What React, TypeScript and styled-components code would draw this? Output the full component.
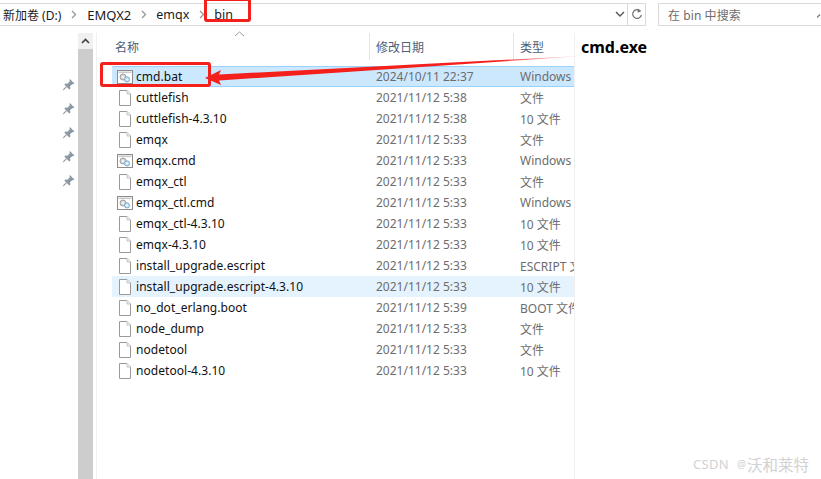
import React from "react";
import styled, { createGlobalStyle } from "styled-components";

const Global = createGlobalStyle`
  html, body { margin: 0; padding: 0; background: #fff; }
  body { width: 821px; height: 479px; overflow: hidden; font-family: "Noto Sans", "Noto Sans CJK SC", sans-serif; font-size: 12px; }
  #root { width: 821px; height: 479px; }
`;

const Page = styled.div`
  position: relative;
  width: 821px;
  height: 479px;
  overflow: hidden;
  display: flex;
  flex-direction: column;
  padding-top: 3px;
  box-sizing: border-box;
`;
const TopBar = styled.div`
  display: flex;
  height: 23px;
  gap: 12px;
  flex: none;
`;
const AddressBox = styled.div`
  width: 646px;
  box-sizing: border-box;
  border: 1px solid #d9d9d9;
  border-left: none;
  display: flex;
  align-items: center;
  color: #1a1a1a;
`;
const Crumb = styled.span<{ $ml: number; $size?: number }>`
  font-size: ${(p) => p.$size ?? 12.5}px;
  margin-left: ${(p) => p.$ml}px;
  white-space: nowrap;
`;
const Sep = styled.svg`
  margin-left: 10px;
  flex: none;
`;
const AddressEnd = styled.div`
  margin-left: auto;
  display: flex;
  align-items: center;
  height: 100%;
`;
const DropBtn = styled.div`
  width: 17px;
  box-sizing: border-box;
  padding-left: 2px;
  display: flex;
  justify-content: center;
`;
const RefreshBtn = styled.div`
  width: 17px;
  height: 100%;
  border-left: 1px solid #d9d9d9;
  display: flex;
  align-items: center;
  justify-content: center;
`;
const SearchBox = styled.div`
  flex: 1;
  box-sizing: border-box;
  border: 1px solid #d9d9d9;
  border-right: none;
  padding-left: 9px;
  display: flex;
  align-items: center;
  justify-content: space-between;
  color: #6d6d6d;
  font-size: 12px;
  letter-spacing: 0.08px;
`;
const Body = styled.div`
  flex: 1;
  display: flex;
  padding-top: 7px;
  min-height: 0;
`;
const QuickPane = styled.div`
  width: 78px;
  flex: none;
  box-sizing: border-box;
  padding: 43px 1px 0 0;
  display: flex;
  flex-direction: column;
  align-items: flex-end;
  gap: 7px;
`;
const Pin = styled.svg`
  width: 17px;
  height: 17px;
  display: block;
`;
const Scrollbar = styled.div`
  width: 15px;
  flex: none;
  background: #cdcdcd;
  display: flex;
  flex-direction: column;
`;
const ScrollUp = styled.div`
  height: 16px;
  background: #f0f0f0;
  display: flex;
  align-items: center;
  justify-content: center;
`;
const FileArea = styled.div`
  width: 479px;
  flex: none;
  box-sizing: border-box;
  border-left: 1px solid #f0f0f0;
  border-right: 1px solid #f0f0f0;
  margin-left: 3px;
  display: flex;
  flex-direction: column;
  position: relative;
`;
const Header = styled.div`
  height: 27px;
  display: grid;
  grid-template-columns: 273px 144px 1fr;
  flex: none;
  margin-bottom: 6px;
`;
const HeadCell = styled.div<{ $pl: number }>`
  color: #4c607a;
  font-size: 12px;
  box-sizing: border-box;
  padding-left: ${(p) => p.$pl}px;
  display: flex;
  align-items: center;
  border-right: 1px solid #e5e5e5;
  &:last-child { border-right: none; }
`;
const SortArrow = styled.svg`
  position: absolute;
  left: 137px;
  top: -2px;
`;
const Row = styled.div<{ $state?: "selected" | "hover" }>`
  height: 21px;
  margin-left: 15px;
  box-sizing: border-box;
  display: grid;
  grid-template-columns: 257px 144px 1fr;
  align-items: center;
  background: ${(p) => (p.$state === "selected" ? "#cce8ff" : p.$state === "hover" ? "#e5f3ff" : "transparent")};
  border-top: 1px solid ${(p) => (p.$state === "selected" ? "#99d1ff" : "transparent")};
  border-bottom: 1px solid ${(p) => (p.$state === "selected" ? "#99d1ff" : "transparent")};
  overflow: hidden;
`;
const NameCell = styled.div`
  display: flex;
  align-items: center;
  gap: 3px;
  padding-left: 5px;
  color: #111;
  white-space: nowrap;
  letter-spacing: 0.05px;
`;
const GreyCell = styled.div`
  color: #6d6d6d;
  padding-left: 7px;
  white-space: nowrap;
  overflow: hidden;
`;
const Icon = styled.svg`
  width: 16px;
  height: 16px;
  flex: none;
`;
const Annotation = styled.div<{ $x: number; $y: number; $w: number; $h: number }>`
  position: absolute;
  box-sizing: border-box;
  border: 3px solid #f4201c;
  border-radius: 3px;
  left: ${(p) => p.$x}px;
  top: ${(p) => p.$y}px;
  width: ${(p) => p.$w}px;
  height: ${(p) => p.$h}px;
`;
const Arrow = styled.svg`
  position: absolute;
  left: 0;
  top: 0;
`;
const Note = styled.div`
  position: absolute;
  left: 581px;
  top: 36px;
  font-size: 16px;
  font-weight: 700;
  color: #000;
  font-family: "Noto Sans", sans-serif;
`;
const Watermark = styled.div`
  position: absolute;
  left: 693px;
  top: 452px;
  height: 24px;
  display: flex;
  align-items: center;
  color: #d2d2d2;
  white-space: nowrap;
`;
const MarkLatin = styled.span`
  font-size: 13px;
  letter-spacing: 0.3px;
`;
const MarkAt = styled.span`
  font-size: 10px;
  margin-left: 8px;
`;
const MarkName = styled.span`
  font-size: 15.5px;
  margin-left: 1px;
`;

const Chevron = () => (
  <Sep width="6" height="9" viewBox="0 0 6 9"><path d="M1 1l3.5 3.5L1 8" fill="none" stroke="#9a9a9a" strokeWidth="1.4" /></Sep>
);
const PinIcon = () => (
  <Pin viewBox="0 0 17 17">
    <path d="M10 3l4.4 4.4-1 .8-1-.2-2.3 2.3.2 2.2-1 1-5-5 1-1 2.2.2L9.8 5.2l-.3-1.2z" fill="#8b98a6" />
    <path d="M6.8 10.4l-3.6 3.6" fill="none" stroke="#9aa3ad" strokeWidth="1.2" />
  </Pin>
);
const DocIcon = () => (
  <Icon viewBox="0 0 16 16">
    <path d="M2.5.5h7.5l3.5 3.5v11.5h-11z" fill="#fff" stroke="#9a9a9a" />
    <path d="M10 .5v3.5h3.5" fill="#f2f2f2" stroke="#c4c4c4" />
  </Icon>
);
const CmdIcon = () => (
  <Icon viewBox="0 0 16 16">
    <rect x=".5" y="1.5" width="15" height="13" fill="#fff" stroke="#8c8c8c" />
    <rect x="1.5" y="2.5" width="13" height="1.6" fill="#c9c9c9" />
    <circle cx="6" cy="8" r="3" fill="#d6d6d6" stroke="#a0a0a0" />
    <circle cx="6" cy="8" r="1" fill="#fff" />
    <circle cx="10" cy="10.4" r="2.6" fill="#c4def2" stroke="#7fb0d2" />
    <circle cx="10" cy="10.4" r=".9" fill="#fff" />
  </Icon>
);

type F = { n: string; d: string; t: string; k?: "cmd"; s?: "selected" | "hover" };
const files: F[] = [
  { n: "cmd.bat", d: "2024/10/11 22:37", t: "Windows", k: "cmd", s: "selected" },
  { n: "cuttlefish", d: "2021/11/12 5:38", t: "文件" },
  { n: "cuttlefish-4.3.10", d: "2021/11/12 5:38", t: "10 文件" },
  { n: "emqx", d: "2021/11/12 5:33", t: "文件" },
  { n: "emqx.cmd", d: "2021/11/12 5:33", t: "Windows", k: "cmd" },
  { n: "emqx_ctl", d: "2021/11/12 5:33", t: "文件" },
  { n: "emqx_ctl.cmd", d: "2021/11/12 5:33", t: "Windows", k: "cmd" },
  { n: "emqx_ctl-4.3.10", d: "2021/11/12 5:33", t: "10 文件" },
  { n: "emqx-4.3.10", d: "2021/11/12 5:33", t: "10 文件" },
  { n: "install_upgrade.escript", d: "2021/11/12 5:33", t: "ESCRIPT 文件" },
  { n: "install_upgrade.escript-4.3.10", d: "2021/11/12 5:33", t: "10 文件", s: "hover" },
  { n: "no_dot_erlang.boot", d: "2021/11/12 5:39", t: "BOOT 文件" },
  { n: "node_dump", d: "2021/11/12 5:33", t: "文件" },
  { n: "nodetool", d: "2021/11/12 5:33", t: "文件" },
  { n: "nodetool-4.3.10", d: "2021/11/12 5:33", t: "10 文件" },
];

export default function App() {
  return (
    <Page>
      <Global />
      <TopBar>
        <AddressBox>
          <Crumb $ml={3} $size={12}>新加卷 (D:)</Crumb>
          <Chevron />
          <Crumb $ml={10} $size={13}>EMQX2</Crumb>
          <Chevron />
          <Crumb $ml={9}>emqx</Crumb>
          <Chevron />
          <Crumb $ml={9}>bin</Crumb>
          <AddressEnd>
            <DropBtn>
              <svg width="10" height="7" viewBox="0 0 10 7"><path d="M1 1l4 4 4-4" fill="none" stroke="#555" strokeWidth="1.4" /></svg>
            </DropBtn>
            <RefreshBtn>
              <svg width="12" height="13" viewBox="0 0 12 13"><path d="M9.5 3.2A4.4 4.4 0 1 0 10.4 7" fill="none" stroke="#707070" strokeWidth="1.2" /><path d="M6.6 .6l3.4 2.6-3.4 1.6z" fill="#707070" /></svg>
            </RefreshBtn>
          </AddressEnd>
        </AddressBox>
        <SearchBox>
          在 bin 中搜索
          <svg width="4" height="6" viewBox="0 0 4 6"><path d="M0 5.5L3 2.5" fill="none" stroke="#707070" strokeWidth="1.2" /></svg>
        </SearchBox>
      </TopBar>
      <Body>
        <QuickPane>
          {[0, 1, 2, 3, 4].map((i) => <PinIcon key={i} />)}
        </QuickPane>
        <Scrollbar>
          <ScrollUp>
            <svg width="9" height="6" viewBox="0 0 9 6"><path d="M1 5l3.5-3.5L8 5" fill="none" stroke="#404040" strokeWidth="1.6" /></svg>
          </ScrollUp>
        </Scrollbar>
        <FileArea>
          <SortArrow width="11" height="6" viewBox="0 0 11 6"><path d="M1 5l4.5-4L10 5" fill="none" stroke="#9a9a9a" /></SortArrow>
          <Header>
            <HeadCell $pl={18}>名称</HeadCell>
            <HeadCell $pl={6}>修改日期</HeadCell>
            <HeadCell $pl={6}>类型</HeadCell>
          </Header>
          {files.map((f) => (
            <Row key={f.n} $state={f.s}>
              <NameCell>
                {f.k === "cmd" ? <CmdIcon /> : <DocIcon />}
                {f.n}
              </NameCell>
              <GreyCell>{f.d}</GreyCell>
              <GreyCell>{f.t}</GreyCell>
            </Row>
          ))}
        </FileArea>
      </Body>
      <Note>cmd.exe</Note>
      <Watermark>
        <MarkLatin>CSDN</MarkLatin>
        <MarkAt>@</MarkAt>
        <MarkName>沃和莱特</MarkName>
      </Watermark>
      <Annotation $x={204} $y={-2} $w={47} $h={24} />
      <Annotation $x={100} $y={62} $w={111} $h={25} />
      <Arrow width="821" height="479" viewBox="0 0 821 479">
        <defs>
          <linearGradient id="fade" x1="207" y1="0" x2="590" y2="0" gradientUnits="userSpaceOnUse">
            <stop offset="0" stopColor="#f4201c" />
            <stop offset="0.75" stopColor="#f4201c" />
            <stop offset="1" stopColor="#f4201c" stopOpacity="0" />
          </linearGradient>
        </defs>
        <path d="M219 74.5 L590 55.5 L219 80.5 L221 85 L205 78 L221 70 Z" fill="url(#fade)" />
      </Arrow>
    </Page>
  );
}
